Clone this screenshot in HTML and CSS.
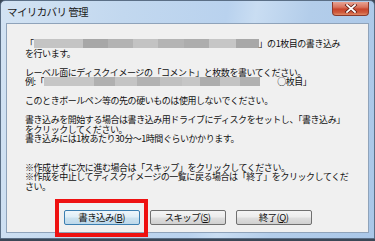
FILE: index.html
```html
<!DOCTYPE html>
<html lang="ja">
<head>
<meta charset="utf-8">
<title>マイリカバリ 管理</title>
<link rel="stylesheet" href="styles.css">
</head>
<body>
<div class="window">
  <div class="titlebar">
    <span class="title">マイリカバリ 管理</span>
    <span class="close" aria-label="閉じる">
      <svg width="14" height="9" viewBox="0 0 14 9">
        <path d="M3 1 L11 8 M11 1 L3 8" stroke="#5a1a12" stroke-width="3.2" stroke-linecap="square" fill="none"/>
        <path d="M3 1 L11 8 M11 1 L3 8" stroke="#ffffff" stroke-width="1.8" stroke-linecap="square" fill="none"/>
      </svg>
    </span>
  </div>
  <div class="panel">
    <div class="msg">
      <p class="para"><span class="row">「<span class="mask mask1"></span>」の1枚目の書き込み</span><span class="row">を行います。</span></p>
      <p class="para"><span class="row">レーベル面にディスクイメージの「コメント」と枚数を書いてください。</span><span class="row">例:「<span class="mask mask2"></span>○枚目」</span></p>
      <p class="para"><span class="row">このときボールペン等の先の硬いものは使用しないでください。</span></p>
      <p class="para"><span class="row">書き込みを開始する場合は書き込み用ドライブにディスクをセットし、「書き込み」</span><span class="row">をクリックしてください。</span><span class="row">書き込みには1枚あたり30分～1時間ぐらいかかります。</span></p>
      <p class="para notes"><span class="row">※作成せずに次に進む場合は「スキップ」をクリックしてください。</span><span class="row">※作成を中止してディスクイメージの一覧に戻る場合は「終了」をクリックしてくだ</span><span class="row">さい。</span></p>
    </div>
    <div class="buttons">
      <span class="btn btn-default">書き込み(<u>B</u>)</span>
      <span class="btn">スキップ(<u>S</u>)</span>
      <span class="btn">終了(<u>Q</u>)</span>
    </div>
  </div>
  <div class="highlight"></div>
</div>
</body>
</html>
```

FILE: styles.css
```css
* { box-sizing: border-box; }
html, body { margin: 0; padding: 0; }
body {
  width: 375px;
  height: 241px;
  overflow: hidden;
  background: #3b4756;
  font-family: "Noto Sans CJK JP", "Noto Sans", sans-serif;
}
.window {
  position: relative;
  width: 375px;
  height: 239px;
  display: flex;
  flex-direction: column;
  padding: 0 5px 5px 5px;
  border: 1px solid #5b6f86;
  border-radius: 5px 5px 0 0;
  background: linear-gradient(100deg, #d3e3f3 0%, #c2d8ef 30%, #b9d2ee 55%, #c9ddf2 62%, #b3cdea 75%, #aac7e8 100%);
}
.titlebar {
  height: 22px;
  flex: none;
  display: flex;
  justify-content: space-between;
  align-items: flex-start;
}
.title {
  margin-top: 4px;
  padding-left: 1px;
  font-size: 10.5px;
  line-height: 13px;
  letter-spacing: -0.6px;
  color: #1b1b1b;
}
.close {
  width: 37px;
  height: 14px;
  margin-top: 1px;
  margin-right: 0;
  display: flex;
  align-items: center;
  justify-content: center;
  border: 1px solid #8a3a2c;
  border-top: none;
  border-radius: 0 0 4px 4px;
  background: linear-gradient(#e7a393 0%, #d9735d 40%, #c8452c 55%, #cf5a3c 80%, #e08a66 100%);
}
.panel {
  flex: 1;
  display: flex;
  flex-direction: column;
  background: #f0f0f0;
  border: 1px solid #8fa3ba;
  padding: 15px 10px 0 18px;
}
.msg {
  font-size: 9px;
  line-height: 9.5px;
  letter-spacing: -0.45px;
  color: #111;
}
.para {
  margin: 0 0 9.5px 0;
}
.notes {
  margin-top: 19px;
}
.row {
  display: flex;
  align-items: center;
  height: 9.5px;
  white-space: nowrap;
}
.mask {
  display: inline-block;
  height: 9px;
}
.mask1 {
  width: 225px;
  background: linear-gradient(to right,
    #c4c4c4 0 49px, #a7a7a7 49px 74px, #b3b3b3 74px 99px, #c3c3c3 99px 124px,
    #b4b4b4 124px 150px, #adadad 150px 175px, #c6c6c6 175px 202px, #a8a8a8 202px 225px);
}
.mask2 {
  width: 216px;
  margin-right: 17px;
  background: linear-gradient(to right,
    #c6c6c6 0 50px, #b0b0b0 50px 71px, #c4c4c4 71px 93px, #b2b2b2 93px 116px,
    #c0c0c0 116px 138px, #c6c6c6 138px 156px, #adadad 156px 176px, #c3c3c3 176px 196px, #b1b1b1 196px 216px);
}
.buttons {
  display: flex;
  justify-content: center;
  gap: 10px;
  margin-top: 9px;
  padding-right: 8px;
}
.btn {
  width: 76px;
  height: 15px;
  display: flex;
  align-items: center;
  justify-content: center;
  font-size: 9.5px;
  letter-spacing: -0.6px;
  color: #111;
  border: 1px solid #707070;
  border-radius: 2px;
  background: linear-gradient(#f4f4f4 0%, #ececec 48%, #dedede 52%, #d0d0d0 100%);
}
.btn u {
  text-decoration-thickness: 1px;
  text-underline-offset: 1px;
}
.btn-default {
  border-color: #3c7fb1;
  background: linear-gradient(#eef6fb 0%, #dfeef7 48%, #cde3f0 52%, #bdd8ea 100%);
}
.highlight {
  position: absolute;
  left: 54px;
  top: 198px;
  width: 93px;
  height: 38px;
  border: 4px solid #ee1111;
}
```
